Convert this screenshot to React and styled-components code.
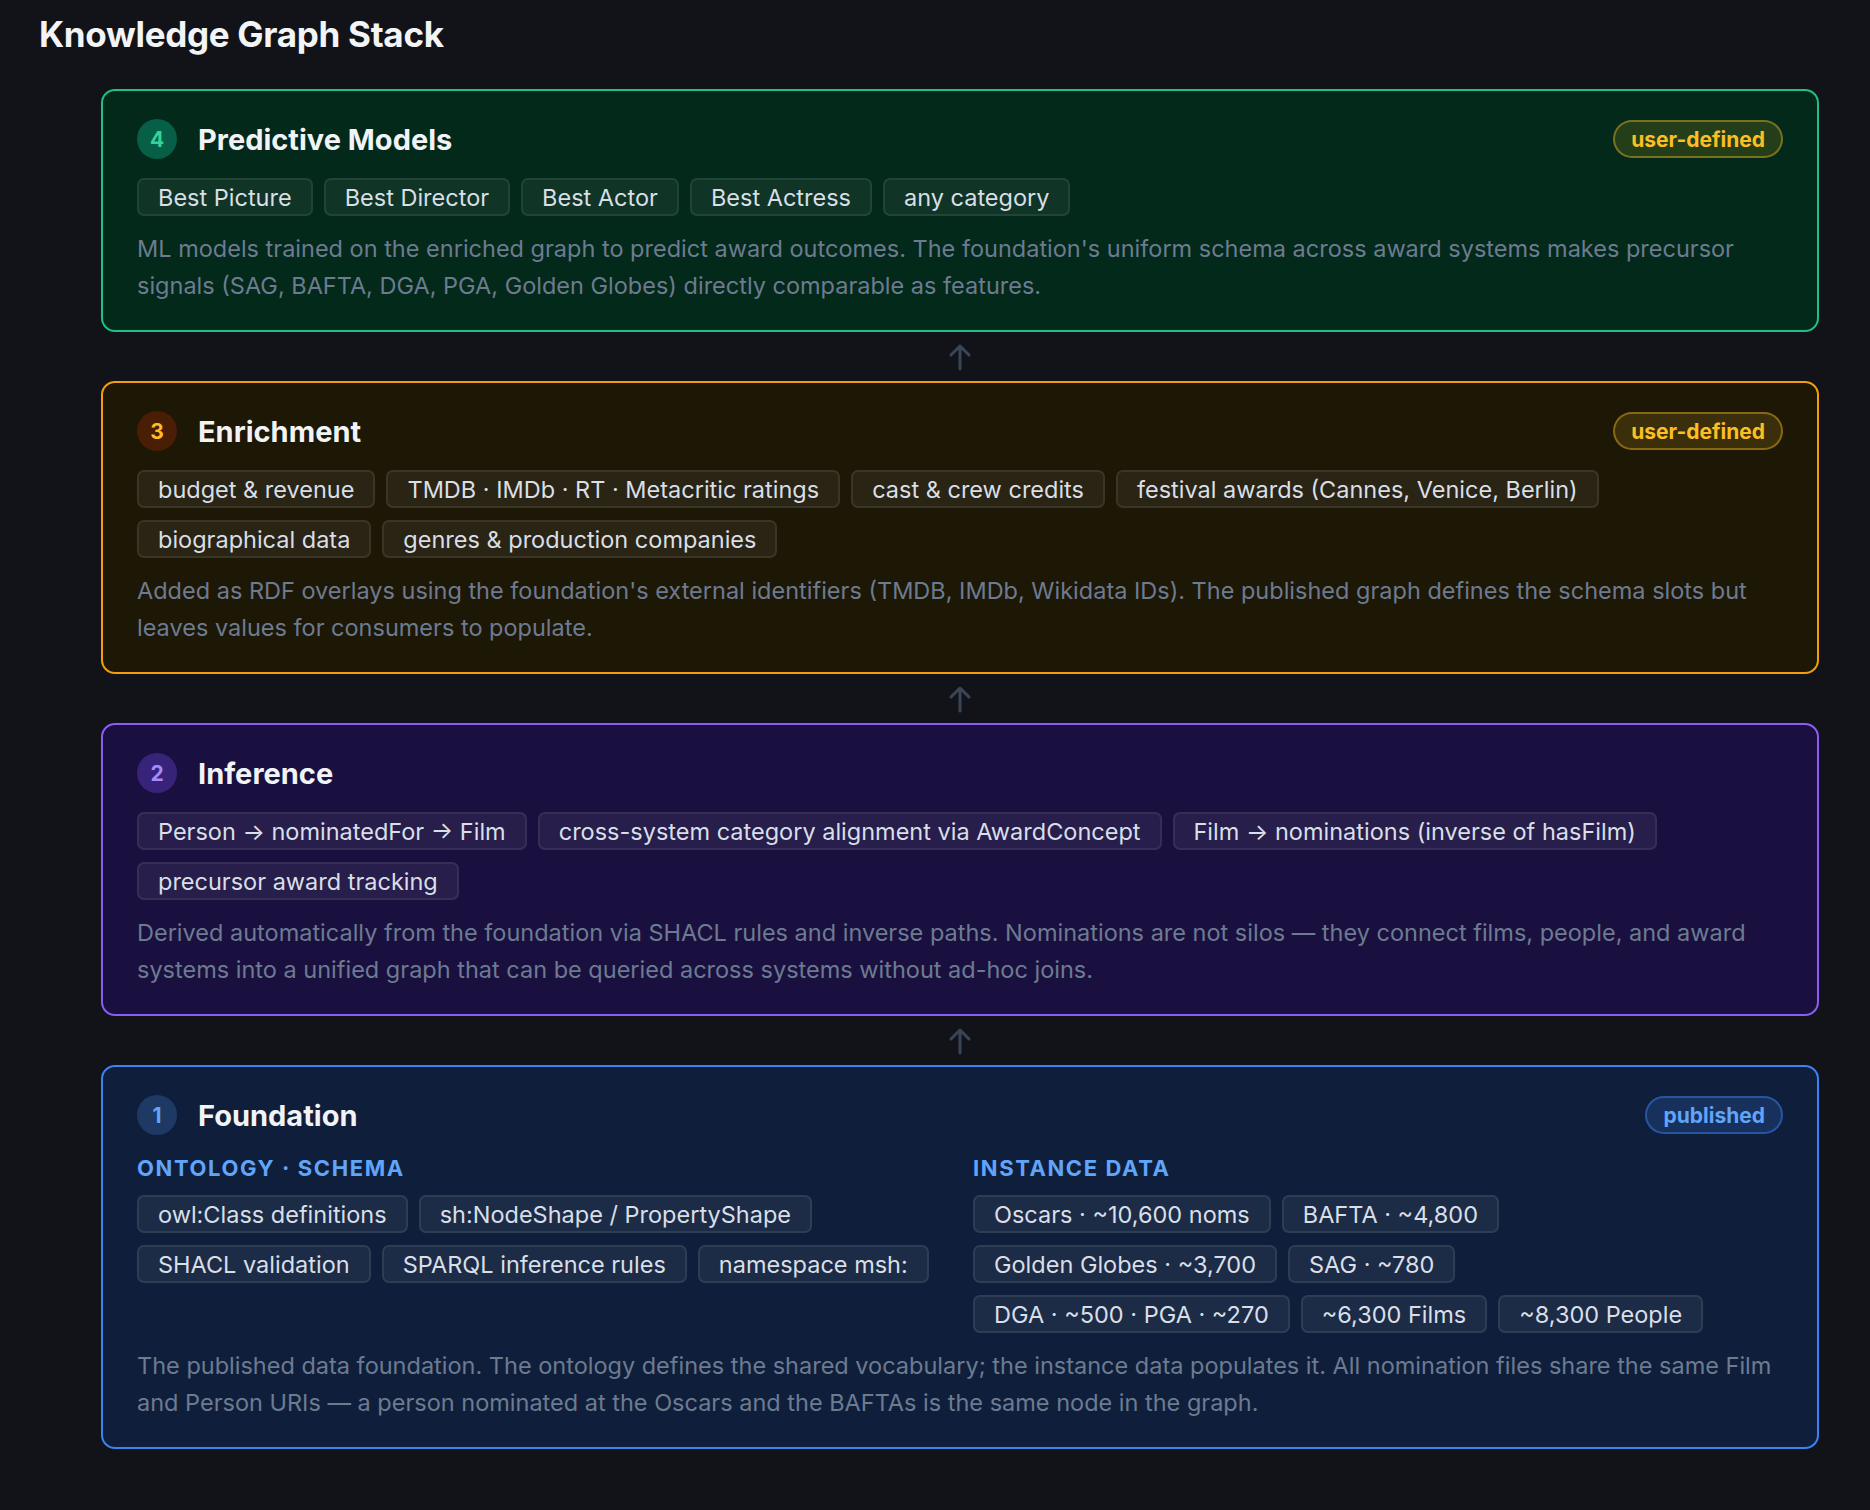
import React from "react";
import styled, { createGlobalStyle } from "styled-components";

const GlobalStyle = createGlobalStyle`
  html, body { margin: 0; background: #111318; }
  body { font-family: Inter, "Noto Sans", "Liberation Sans", sans-serif; }
`;

const themes = {
  green: { bg: "#022919", border: "#1fbf87", numBg: "#065f46", num: "#34d399" },
  amber: { bg: "#1d1706", border: "#f59e0b", numBg: "#4a1d05", num: "#fbbf24" },
  violet: { bg: "#1a1040", border: "#8b5cf6", numBg: "#37237a", num: "#a78bfa" },
  blue: { bg: "#0f1f3b", border: "#3b82f6", numBg: "#1e3a64", num: "#60a5fa" },
};

const Page = styled.div`
  padding: 13px 51px 50px 39px;
`;

const Heading = styled.h1`
  margin: 0 0 34px;
  font-size: 35px;
  font-weight: 700;
  color: #f3f4f6;
  letter-spacing: -0.3px;
`;

const Stack = styled.div`
  margin-left: 62px;
  display: flex;
  flex-direction: column;
`;

const Card = styled.section`
  background: ${(p) => themes[p.$tone].bg};
  border: 2px solid ${(p) => themes[p.$tone].border};
  border-radius: 14px;
  padding: 28px 34px 26px;
`;

const Header = styled.div`
  display: flex;
  align-items: center;
  gap: 21px;
  height: 40px;
`;

const Num = styled.span`
  width: 40px;
  height: 40px;
  border-radius: 50%;
  display: flex;
  align-items: center;
  justify-content: center;
  background: ${(p) => themes[p.$tone].numBg};
  color: ${(p) => themes[p.$tone].num};
  font-size: 21px;
  font-weight: 700;
`;

const Title = styled.h2`
  margin: 0;
  flex: 1;
  font-size: 29px;
  font-weight: 700;
  color: #f1f3f6;
`;

const Pill = styled.span`
  height: 34px;
  padding: 0 16px;
  border-radius: 20px;
  display: flex;
  align-items: center;
  font-size: 21px;
  font-weight: 700;
  color: ${(p) => (p.$blue ? "#60a5fa" : "#fbbf24")};
  background: ${(p) => (p.$blue ? "rgba(59,130,246,0.18)" : "rgba(251,191,36,0.14)")};
  border: 2px solid ${(p) => (p.$blue ? "rgba(59,130,246,0.45)" : "rgba(251,191,36,0.4)")};
`;

const Chips = styled.div`
  display: flex;
  flex-wrap: wrap;
  gap: 12px 11px;
  margin-top: ${(p) => p.$top || 19}px;
`;

const Chip = styled.span`
  height: 38px;
  padding: 0 19px;
  box-sizing: border-box;
  display: flex;
  align-items: center;
  border-radius: 7px;
  background: rgba(255, 255, 255, 0.06);
  border: 2px solid rgba(255, 255, 255, 0.08);
  color: #d9dfe7;
  font-size: 23.5px;
`;

const Desc = styled.p`
  margin: 14px 0 0;
  font-size: 23.5px;
  line-height: 37px;
  color: #6d7b91;
`;

const Columns = styled.div`
  display: grid;
  grid-template-columns: 1fr 1fr;
  gap: 26px;
  margin-top: 20px;
`;

const SubTitle = styled.div`
  font-size: 22px;
  font-weight: 700;
  letter-spacing: 1.6px;
  color: #60a5fa;
`;

const ArrowRow = styled.div`
  height: 49px;
  display: flex;
  align-items: center;
  justify-content: center;
`;

const Arrow = () => (
  <ArrowRow>
    <svg width="26" height="30" viewBox="0 0 26 30" fill="none" stroke="#3a4558" strokeWidth="3" strokeLinecap="round" strokeLinejoin="round">
      <path d="M13 27V4M4 13l9-9 9 9" />
    </svg>
  </ArrowRow>
);

const Layer = ({ tone, n, title, pill, chips, desc, children }) => (
  <Card $tone={tone}>
    <Header>
      <Num $tone={tone}>{n}</Num>
      <Title>{title}</Title>
      {pill && <Pill $blue={pill === "published"}>{pill}</Pill>}
    </Header>
    {chips && (
      <Chips>
        {chips.map((c) => (
          <Chip key={c}>{c}</Chip>
        ))}
      </Chips>
    )}
    {children}
    <Desc>{desc}</Desc>
  </Card>
);

export default function App() {
  return (
    <Page>
      <GlobalStyle />
      <Heading>Knowledge Graph Stack</Heading>
      <Stack>
        <Layer
          tone="green"
          n="4"
          title="Predictive Models"
          pill="user-defined"
          chips={["Best Picture", "Best Director", "Best Actor", "Best Actress", "any category"]}
          desc="ML models trained on the enriched graph to predict award outcomes. The foundation's uniform schema across award systems makes precursor signals (SAG, BAFTA, DGA, PGA, Golden Globes) directly comparable as features."
        />
        <Arrow />
        <Layer
          tone="amber"
          n="3"
          title="Enrichment"
          pill="user-defined"
          chips={[
            "budget & revenue",
            "TMDB · IMDb · RT · Metacritic ratings",
            "cast & crew credits",
            "festival awards (Cannes, Venice, Berlin)",
            "biographical data",
            "genres & production companies",
          ]}
          desc="Added as RDF overlays using the foundation's external identifiers (TMDB, IMDb, Wikidata IDs). The published graph defines the schema slots but leaves values for consumers to populate."
        />
        <Arrow />
        <Layer
          tone="violet"
          n="2"
          title="Inference"
          chips={[
            "Person → nominatedFor → Film",
            "cross-system category alignment via AwardConcept",
            "Film → nominations (inverse of hasFilm)",
            "precursor award tracking",
          ]}
          desc="Derived automatically from the foundation via SHACL rules and inverse paths. Nominations are not silos — they connect films, people, and award systems into a unified graph that can be queried across systems without ad-hoc joins."
        />
        <Arrow />
        <Layer
          tone="blue"
          n="1"
          title="Foundation"
          pill="published"
          desc="The published data foundation. The ontology defines the shared vocabulary; the instance data populates it. All nomination files share the same Film and Person URIs — a person nominated at the Oscars and the BAFTAs is the same node in the graph."
        >
          <Columns>
            <div>
              <SubTitle>ONTOLOGY · SCHEMA</SubTitle>
              <Chips $top={14}>
                {["owl:Class definitions", "sh:NodeShape / PropertyShape", "SHACL validation", "SPARQL inference rules", "namespace msh:"].map((c) => (
                  <Chip key={c}>{c}</Chip>
                ))}
              </Chips>
            </div>
            <div>
              <SubTitle>INSTANCE DATA</SubTitle>
              <Chips $top={14}>
                {[
                  "Oscars · ~10,600 noms",
                  "BAFTA · ~4,800",
                  "Golden Globes · ~3,700",
                  "SAG · ~780",
                  "DGA · ~500 · PGA · ~270",
                  "~6,300 Films",
                  "~8,300 People",
                ].map((c) => (
                  <Chip key={c}>{c}</Chip>
                ))}
              </Chips>
            </div>
          </Columns>
        </Layer>
      </Stack>
    </Page>
  );
}
